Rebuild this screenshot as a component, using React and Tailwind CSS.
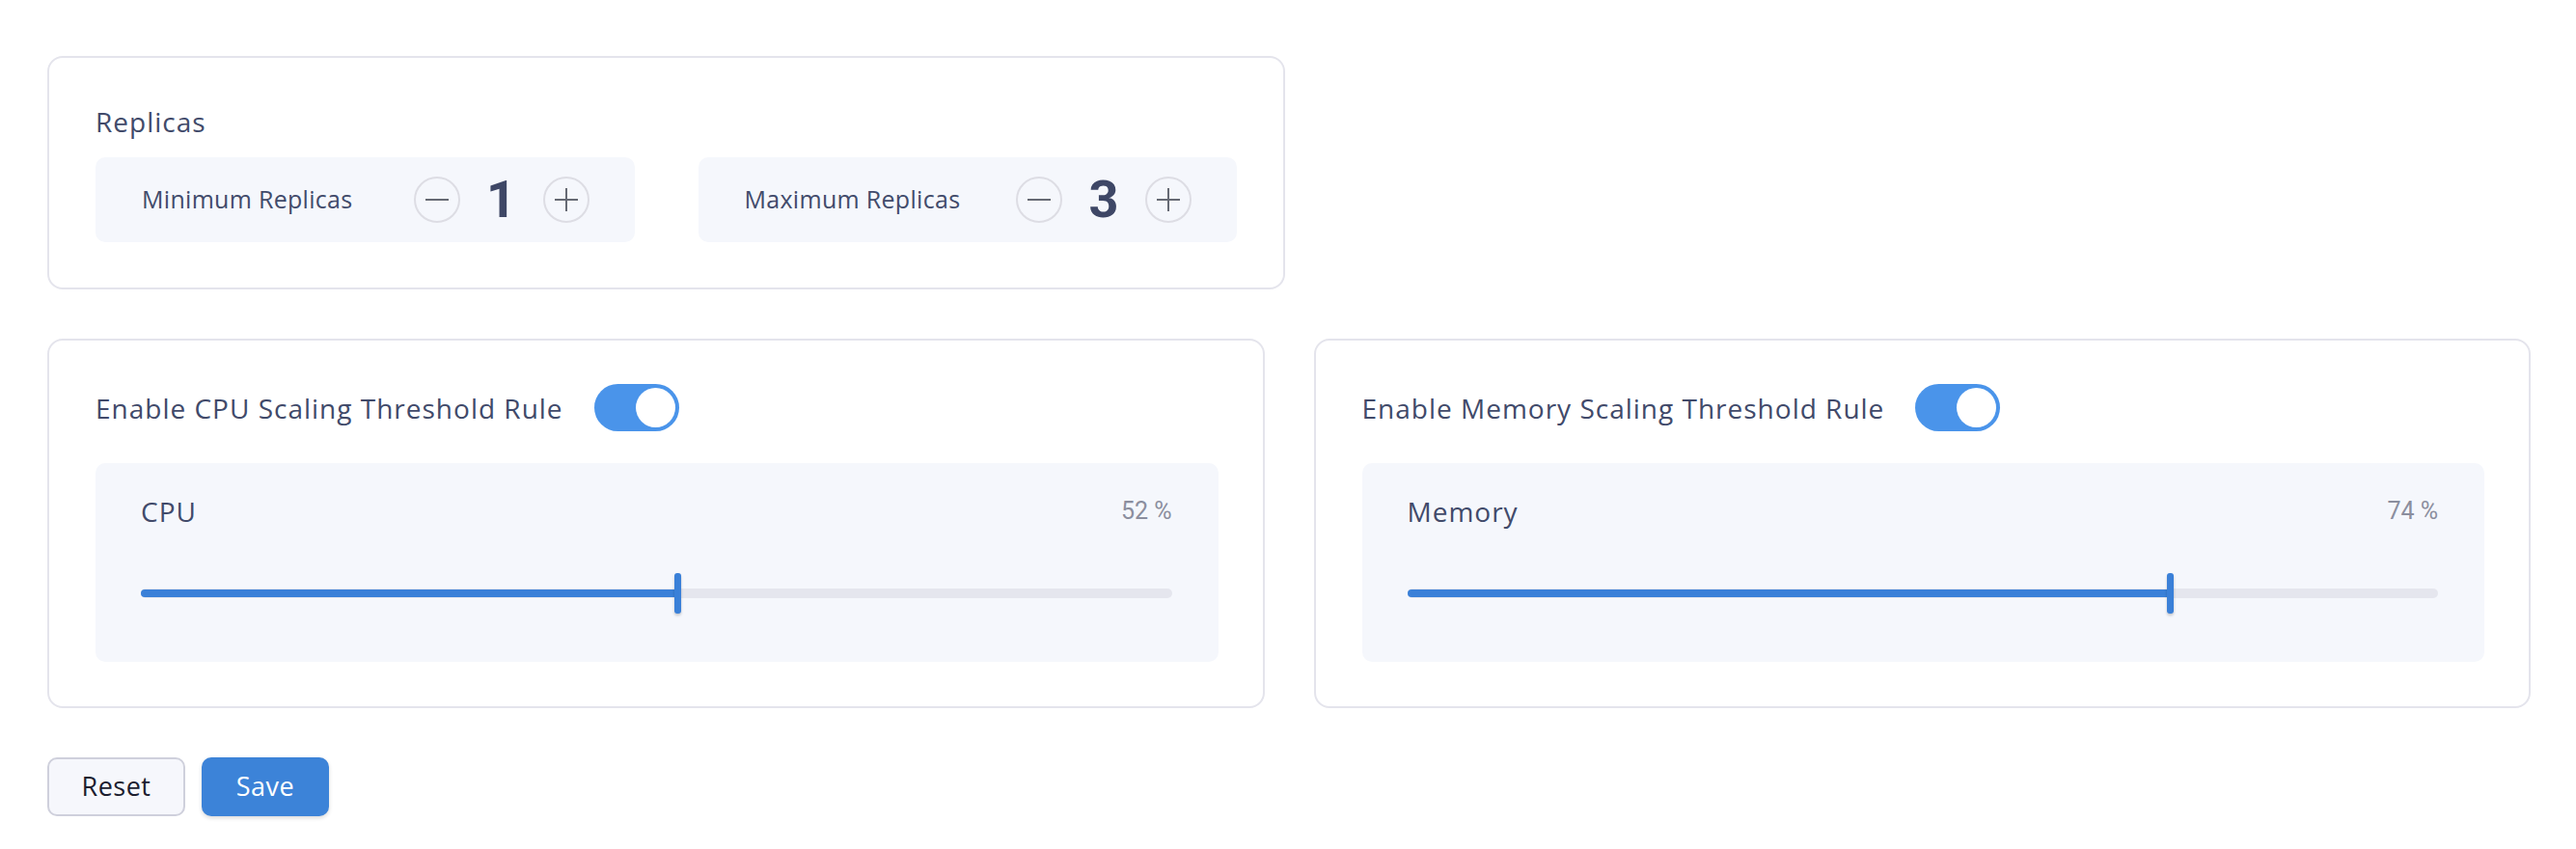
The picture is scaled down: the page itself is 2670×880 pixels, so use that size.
import React, { useState } from "react";

const label = "font-['Open_Sans',sans-serif]";

const Stepper = ({ title, value, onChange }) => (
  <div className="h-[88px] rounded-[10px] bg-[#f5f7fc] pl-[48px] pr-[47px] flex items-center justify-between">
    <span className={`${label} text-[25px] tracking-[0.3px] text-[#424b6b]`}>{title}</span>
    <div className="flex items-center">
      <button
        onClick={() => onChange(Math.max(0, value - 1))}
        className="w-[48px] h-[48px] rounded-full border-2 border-[#dddde4] flex items-center justify-center"
      >
        <svg width="26" height="26" viewBox="0 0 26 26">
          <path d="M1 13h24" stroke="#666a74" strokeWidth="2" />
        </svg>
      </button>
      <span className="w-[86px] text-center font-['Roboto',sans-serif] font-bold text-[54px] leading-none text-[#3e4766]">
        {value}
      </span>
      <button
        onClick={() => onChange(value + 1)}
        className="w-[48px] h-[48px] rounded-full border-2 border-[#dddde4] flex items-center justify-center"
      >
        <svg width="26" height="26" viewBox="0 0 26 26">
          <path d="M1 13h24M13 1v24" stroke="#666a74" strokeWidth="2" />
        </svg>
      </button>
    </div>
  </div>
);

const Toggle = ({ on, onClick }) => (
  <button
    onClick={onClick}
    className={`w-[88px] h-[49px] rounded-full p-[4px] flex ${
      on ? "bg-[#4a94ea] justify-end" : "bg-[#d5d7e0] justify-start"
    }`}
  >
    <span className="w-[41px] h-[41px] rounded-full bg-white" />
  </button>
);

const ThresholdCard = ({ title, name, value }) => {
  const [enabled, setEnabled] = useState(true);
  return (
    <div className="border-2 border-[#e4e4ec] rounded-[16px] h-[383px] pt-[45px] pl-[48px] pr-[46px]">
      <div className="flex items-center h-[49px]">
        <span className={`${label} font-medium text-[28px] tracking-[1px] text-[#414a6a]`}>
          {title}
        </span>
        <div className="ml-[32px]">
          <Toggle on={enabled} onClick={() => setEnabled(!enabled)} />
        </div>
      </div>

      {/* Slider panel */}
      <div className="mt-[33px] h-[206px] rounded-[10px] bg-[#f5f7fc] pt-[30px] pl-[47px] pr-[48px]">
        <div className="flex items-center justify-between h-[40px]">
          <span className={`${label} font-medium text-[28px] tracking-[1px] text-[#414a6a]`}>
            {name}
          </span>
          <span className="font-['Roboto',sans-serif] text-[25px] text-[#8b8e9e]">
            {value} %
          </span>
        </div>
        <div className="relative mt-[44px] h-[42px]">
          <div className="absolute left-0 right-0 top-[16px] h-[10px] rounded-full bg-[#e5e6ee]" />
          <div
            className="absolute left-0 top-[17px] h-[8px] rounded-l-full bg-[#3a80d8]"
            style={{ width: `${value}%` }}
          />
          <div
            className="absolute top-0 w-[7px] h-[42px] -ml-[3px] rounded-[3px] bg-[#3a80d8] shadow-[0_2px_3px_rgba(0,0,0,0.2)]"
            style={{ left: `${value}%` }}
          />
        </div>
      </div>
    </div>
  );
};

export default function App() {
  const [min, setMin] = useState(1);
  const [max, setMax] = useState(3);

  return (
    <div className="bg-white min-h-[880px] pl-[49px] pr-[47px] pt-[58px]">
      {/* Replicas */}
      <div className="w-[1283px] h-[242px] border-2 border-[#e4e4ec] rounded-[16px] pt-[46px] px-[48px]">
        <div className={`${label} font-medium text-[28px] tracking-[1px] leading-[40px] text-[#414a6a]`}>
          Replicas
        </div>
        <div className="mt-[17px] grid grid-cols-2 gap-[66px]">
          <Stepper title="Minimum Replicas" value={min} onChange={setMin} />
          <Stepper title="Maximum Replicas" value={max} onChange={setMax} />
        </div>
      </div>

      {/* Thresholds */}
      <div className="mt-[51px] grid grid-cols-2 gap-[51px]">
        <ThresholdCard
          title="Enable CPU Scaling Threshold Rule"
          name="CPU"
          value={52}
        />
        <ThresholdCard
          title="Enable Memory Scaling Threshold Rule"
          name="Memory"
          value={74}
        />
      </div>

      {/* Actions */}
      <div className="mt-[51px] flex gap-[17px]">
        <button
          className={`${label} w-[143px] h-[61px] rounded-[10px] border-2 border-[#cfd0dc] bg-[#f6f7fc] text-[27px] tracking-[0.5px] text-[#1c1d2f]`}
        >
          Reset
        </button>
        <button
          className={`${label} w-[132px] h-[61px] rounded-[10px] bg-[#3c83d8] text-[27px] tracking-[0.5px] text-white shadow-[0_2px_4px_rgba(0,0,0,0.15)]`}
        >
          Save
        </button>
      </div>
    </div>
  );
}
